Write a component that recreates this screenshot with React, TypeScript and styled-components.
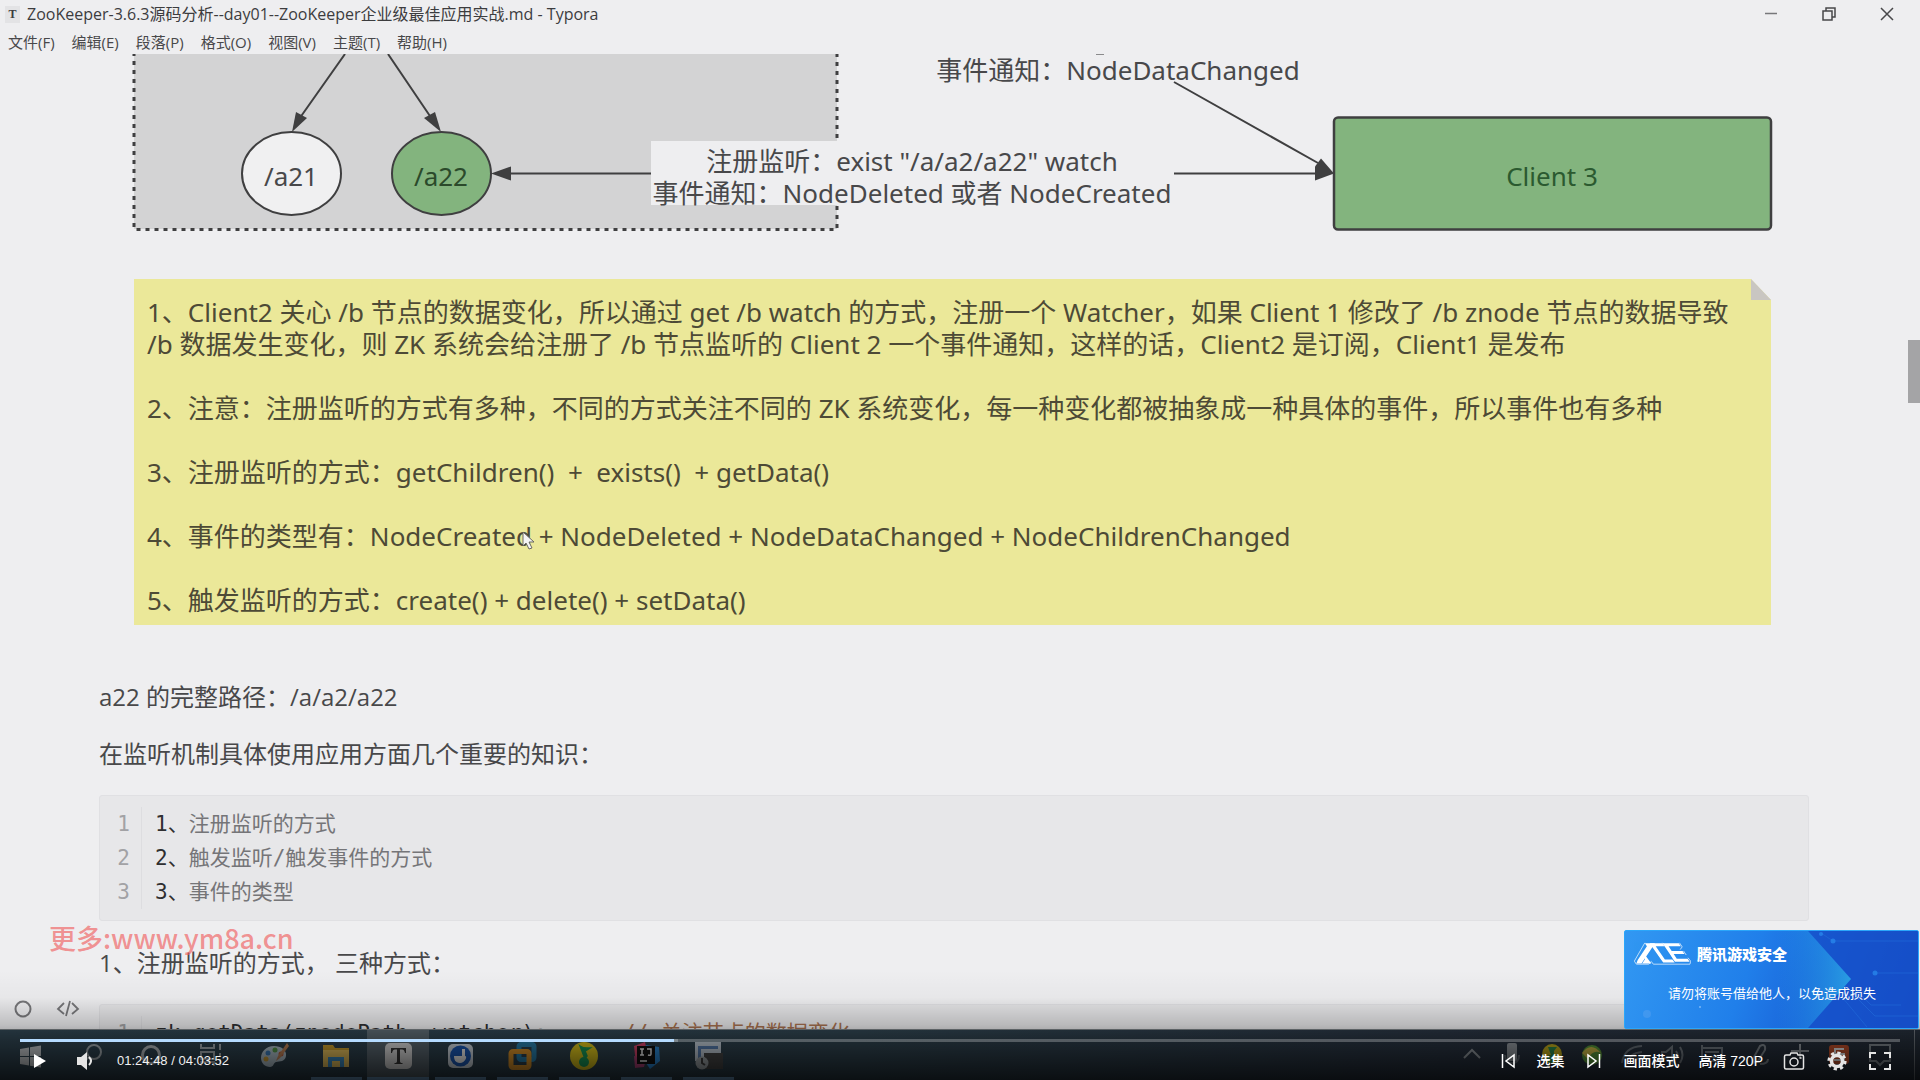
import React from "react";
import styled, { createGlobalStyle } from "styled-components";

const sans = `"Open Sans", "Noto Sans CJK SC", sans-serif`;
const drawn = `"Noto Sans", "Noto Sans CJK SC", sans-serif`;
const mono = `"DejaVu Sans Mono", "Noto Sans CJK SC", monospace`;
const ui = `"Liberation Sans", "Noto Sans CJK SC", sans-serif`;

const Global = createGlobalStyle`
  * { box-sizing: border-box; }
  body { margin: 0; background: #0c1114; overflow: hidden; }
  button { border: 0; padding: 0; margin: 0; background: none; color: inherit; font: inherit; cursor: pointer; }
  svg { display: block; }
  p, pre, ol, figure, h1, h2 { margin: 0; padding: 0; font-weight: 400; }
`;

const Screen = styled.main`
  position: relative;
  height: 100vh;
  display: grid;
  grid-template-rows: minmax(0, 1fr) 51px;
  overflow: hidden;
  font-family: ${sans};
  color: #48484a;
`;

/* ---------- editor window ---------- */

const Window = styled.section`
  position: relative;
  display: flex;
  flex-direction: column;
  min-height: 0;
  background: #eeeef0;
  overflow: hidden;
`;

const TitleBar = styled.header`
  display: flex;
  align-items: center;
  height: 30px;
  padding: 0 20px 2px 5px;
  flex: none;
`;

const AppBadge = styled.span`
  width: 15px;
  height: 17px;
  margin-right: 7px;
  background: #e3e3e5;
  font: 700 12px/17px "Liberation Serif", serif;
  text-align: center;
  color: #3c3c3e;
`;

const Title = styled.h1`
  flex: 1;
  font-size: 16px;
  line-height: 20px;
  color: #3c3c3e;
`;

const WindowButtons = styled.div`
  display: flex;
  gap: 32px;
`;

const WindowButton = styled.button`
  width: 26px;
  height: 26px;
  display: grid;
  place-items: center;
`;

const MenuBar = styled.nav`
  display: flex;
  gap: 17px;
  height: 24px;
  padding: 0 8px;
  flex: none;
  font-size: 15px;
  line-height: 24px;
`;

const Body = styled.div`
  flex: 1;
  min-height: 0;
  display: flex;
`;

const Doc = styled.article`
  flex: 1;
  min-width: 0;
  overflow: hidden;
  padding: 0 99px;
`;

const Scroll = styled.div`
  width: 12px;
  padding-top: 286px;
`;

const Thumb = styled.div`
  height: 63px;
  background: #a4a4a6;
`;

const Figure = styled.figure`
  padding: 0 38px 0 35px;
  margin-bottom: 53px;
`;

const Diagram = styled.svg`
  width: 100%;
  height: auto;
  overflow: visible;
  font-family: ${drawn};
  font-size: 26px;
  fill: #48484a;
`;

const Note = styled.div`
  position: relative;
  margin-top: 49px;
  padding: 17px 13px 9px;
  background: #ebe899;
  color: #4d4a36;
  font-family: ${drawn};
  font-size: 26px;
  line-height: 32px;
  white-space: pre-wrap;
  clip-path: polygon(0 0, calc(100% - 20px) 0, 100% 21px, 100% 100%, 0 100%);

  &::after {
    content: "";
    position: absolute;
    top: 0;
    right: 0;
    width: 20px;
    height: 21px;
    background: #c9c6c2;
  }
`;

const NoteItem = styled.p`
  & + & { margin-top: 32px; }
`;

const Para = styled.p`
  font-size: 24px;
  line-height: 38px;
  margin-bottom: 19px;
  white-space: pre-wrap;
`;

const CodeBlock = styled.ol`
  list-style: none;
  margin: 22px 0 23px;
  padding: 11px 0;
  border: 1px solid #e0e0e3;
  border-radius: 3px;
  background: #e7e7e9;
  font-family: ${mono};
  font-size: 21px;
  line-height: 34px;
  color: #757578;
`;

const CodeLine = styled.li`
  display: flex;
  white-space: pre;
`;

const LineNo = styled.span`
  width: 42px;
  padding-right: 11px;
  margin-right: 13px;
  border-right: 1px solid #dddde0;
  text-align: right;
  color: #a2a2a5;
`;

const Dark = styled.span`
  color: #2f2f31;
`;

const Comment = styled.span`
  color: #a8714f;
`;

const StatusIcons = styled.div`
  position: absolute;
  left: 14px;
  bottom: 11px;
  display: flex;
  align-items: center;
  gap: 24px;
  color: #77777a;
`;

const Pointer = styled.svg`
  position: absolute;
  left: 522px;
  top: 531px;
`;

const Watermark = styled.div`
  position: absolute;
  left: 49px;
  bottom: 124px;
  font: 500 27px/36px "Noto Sans CJK SC", sans-serif;
  color: rgba(240, 92, 92, 0.65);
`;

/* ---------- taskbar ---------- */

const Taskbar = styled.footer`
  display: flex;
  align-items: stretch;
  border-top: 1px solid #7d8488;
  background: linear-gradient(90deg, #304552 0%, #2f434f 45%, #293442 75%, #252e3a 100%);
`;

const Task = styled.button<{ $open?: boolean; $active?: boolean }>`
  width: ${(p) => (p.$open ? 62 : 61)}px;
  display: grid;
  place-items: center;
  position: relative;
  background: ${(p) => (p.$active ? "#5b6972" : "transparent")};

  &::after {
    content: "";
    display: ${(p) => (p.$open ? "block" : "none")};
    position: absolute;
    left: ${(p) => (p.$active ? 0 : 6)}px;
    right: ${(p) => (p.$active ? 0 : 5)}px;
    bottom: 0;
    height: 3px;
    background: #76a9d4;
  }
`;

const Tray = styled.div`
  margin-left: auto;
  display: flex;
  padding-right: 14px;
  border-right: 1px solid #6a7178;
  margin-right: 5px;
`;

const TrayButton = styled.button<{ $spaced?: boolean }>`
  width: 40px;
  margin-right: ${(p) => (p.$spaced ? 8 : 0)}px;
  display: grid;
  place-items: center;
  color: #969da3;
`;

/* ---------- player ---------- */

const Player = styled.section`
  position: absolute;
  left: 0;
  right: 0;
  bottom: 0;
  height: 110px;
  display: flex;
  flex-direction: column;
  justify-content: flex-end;
  background: linear-gradient(180deg, rgba(0, 0, 0, 0) 0%, rgba(0, 0, 0, 0.03) 25%, rgba(0, 0, 0, 0.2) 50%, rgba(0, 0, 0, 0.4) 65%, rgba(0, 0, 0, 0.76) 100%);
  font: 14px/20px ${ui};
  color: #fff;
`;

const Progress = styled.input`
  appearance: none;
  display: block;
  margin: 0 20px;
  height: 3px;
  background: linear-gradient(90deg, #b5dbff 0 34.8%, #7c868c 34.8% 35%, rgba(255, 255, 255, 0.25) 35%);
  cursor: pointer;

  &::-webkit-slider-thumb {
    appearance: none;
    width: 0;
    height: 0;
  }
`;

const Controls = styled.div`
  display: flex;
  align-items: center;
  height: 38px;
  padding: 0 29px 0 30px;
`;

const Control = styled.button<{ $gap?: number }>`
  display: block;
  margin-left: ${(p) => p.$gap ?? 0}px;
  font-weight: 500;
  white-space: nowrap;
`;

const Time = styled.span`
  margin-left: 24px;
  font-size: 13px;
  color: #f0f0f0;
`;

const Right = styled.div`
  margin-left: auto;
  display: flex;
  align-items: center;
`;

/* ---------- security toast ---------- */

const Toast = styled.aside`
  position: absolute;
  right: 1px;
  bottom: 51px;
  width: 295px;
  height: 99px;
  border: 1px solid #2ba6fa;
  border-radius: 2px;
  background: linear-gradient(110deg, #3298f2 0%, #207fea 42%, #195fd6 68%, #164bc4 100%);
  color: #fff;
  overflow: hidden;
  display: flex;
  flex-direction: column;
`;

const ToastArt = styled.svg`
  position: absolute;
  inset: 0;
  width: 100%;
  height: 100%;
`;

const ToastHead = styled.div`
  position: relative;
  display: flex;
  align-items: center;
  gap: 6px;
  padding: 11px 0 0 9px;
`;

const ToastTitle = styled.h2`
  font: 900 15px/22px "Noto Sans CJK SC", sans-serif;
`;

const ToastText = styled.p`
  position: relative;
  padding: 17px 0 0 43px;
  font: 13px/22px "Noto Sans CJK SC", sans-serif;
`;

const INK = "#3f3f40";

function WatchDiagram() {
  return (
    <Diagram viewBox="134 54 1637 176" role="img" aria-label="ZooKeeper watch">
      <rect x="134" y="40" width="703" height="189" fill="#d3d3d4" />
      <path d="M134 52V229.500H837V52" fill="none" stroke={INK} strokeWidth="3" strokeDasharray="4 5" />
      <g stroke={INK} strokeWidth="2" fill="none">
        <path d="M345 54L297 122M388 54L434 122M510 173.500H652M1174 173.500H1316M1174 82L1318 163" />
      </g>
      <g fill={INK}>
        <path d="M292 132l4-20 11 6z" />
        <path d="M441 132l-17-14 11-6z" />
        <path d="M491 173.500l20-7v14z" />
        <path d="M1334 173.500l-13-15-6 8v14z" />
      </g>
      <ellipse cx="291.500" cy="173.500" rx="49.500" ry="41.500" fill="#f0f0f1" stroke={INK} strokeWidth="2" />
      <ellipse cx="441.500" cy="173.500" rx="49.500" ry="41.500" fill="#83b47e" stroke={INK} strokeWidth="2" />
      <rect x="1334" y="117.500" width="437" height="112" rx="4" fill="#83b47e" stroke={INK} strokeWidth="2.500" />
      <rect x="651" y="141" width="523" height="64" fill="#eeeef0" />
      <rect x="1096" y="54" width="8" height="1" fill="#8a8a8c" />
      <g textAnchor="middle">
        <text x="291" y="186">/a21</text>
        <text x="441" y="186" fill="#2b4a2b">/a22</text>
        <text x="1552" y="186" fill="#2b5a30">Client 3</text>
        <text x="1118" y="80">事件通知：NodeDataChanged</text>
        <text x="912" y="171">注册监听：exist "/a/a2/a22" watch</text>
        <text x="912" y="203">事件通知：NodeDeleted 或者 NodeCreated</text>
      </g>
    </Diagram>
  );
}

const notes = [
  "1、Client2 关心 /b 节点的数据变化，所以通过 get /b watch 的方式，注册一个 Watcher，如果 Client 1 修改了 /b znode 节点的数据导致\n/b 数据发生变化，则 ZK 系统会给注册了 /b 节点监听的 Client 2 一个事件通知，这样的话，Client2 是订阅，Client1 是发布",
  "2、注意：注册监听的方式有多种，不同的方式关注不同的 ZK 系统变化，每一种变化都被抽象成一种具体的事件，所以事件也有多种",
  "3、注册监听的方式：getChildren()  +  exists()  + getData()",
  "4、事件的类型有：NodeCreated + NodeDeleted + NodeDataChanged + NodeChildrenChanged",
  "5、触发监听的方式：create() + delete() + setData()",
];

const codeLines = ["注册监听的方式", "触发监听/触发事件的方式", "事件的类型"];
const menus = ["文件(F)", "编辑(E)", "段落(P)", "格式(O)", "视图(V)", "主题(T)", "帮助(H)"];

const tasks: { name: string; open?: boolean; active?: boolean; art: React.ReactNode }[] = [
  { name: "Start", art: <path d="M4 8l9-1.500v8.500H4zM14 6.300L25 4.500V15H14zM4 16h9v8.500L4 23zM14 16h11v10.500L14 24.700z" fill="#c9ced1" /> },
  { name: "Search", art: <g fill="none" stroke="#a7b0b5" strokeWidth="2"><circle cx="17" cy="11" r="7" /><path d="M12 16l-7 7" /></g> },
  { name: "Cortana", art: <circle cx="13" cy="14" r="8.500" fill="none" stroke="#b9c0c4" strokeWidth="3" /> },
  { name: "Task view", art: <path d="M2 3v4h13V3M2 11h13v7H2zM2 25v-4h13v4M21 3v6M21 12v3M21 18v7" fill="none" stroke="#aab2b7" strokeWidth="2" /> },
  {
    name: "Paint", art: <g><path d="M14 5C6 5 1 11 1 17c0 5 4 9 9 9 4 0 3-4 6-5 4-1 9 0 10-6C27 9 21 5 14 5z" fill="#b9cbd6" /><circle cx="8" cy="12" r="2.500" fill="#3f83c4" /><circle cx="15" cy="9" r="2.500" fill="#5aa04e" /><circle cx="21" cy="13" r="2.500" fill="#c9603e" /><circle cx="6" cy="18" r="2.500" fill="#d7a83c" /><path d="M27 2l-9 13-2 5 4-3L29 5z" fill="#c98a5c" /></g>,
  },
  { name: "Explorer", open: true, art: <g><path d="M1 4h10l2 3h14v19H1z" fill="#d9a92e" /><path d="M1 9h26v17H1z" fill="#f2cb62" /><path d="M6 26V16h16v10h-4v-6h-8v6z" fill="#3f92cc" /></g> },
  { name: "Typora", open: true, active: true, art: <g><rect x="1" y="2" width="27" height="26" rx="5" fill="#e2e2e2" /><path d="M7 7h15v5h-1c-.5-2.500-1.500-3.500-3-3.500h-2V20c0 1.500.5 2 2.500 2v1h-8v-1c2 0 2.500-.5 2.500-2V8.500h-2c-1.500 0-2.500 1-3 3.500H7z" fill="#3a3a3a" /></g> },
  { name: "Listen", open: true, art: <g><rect x="2" y="3" width="25" height="24" rx="5" fill="#d9e2ea" /><circle cx="14.500" cy="15" r="10.500" fill="#1e5fc0" /><path d="M8 15h8V8h3v7c3 0 0 7-5 7s-6-4-6-7z" fill="#fff" /></g> },
  { name: "VMware", open: true, art: <g fill="none" strokeWidth="5"><rect x="11" y="3.500" width="15" height="15" rx="2" stroke="#2a86b5" /><rect x="3" y="10.500" width="18" height="16" rx="2" stroke="#e59a2c" /></g> },
  { name: "QQ Music", open: true, art: <g><circle cx="14" cy="15" r="14" fill="#e8cf1e" /><path d="M10 5c4 3 8 2 10 2l-5 3 2 5-2 3z" fill="#1ba35d" stroke="#1ba35d" strokeWidth="1.500" /><circle cx="14" cy="21" r="5" fill="#1ba35d" /></g> },
  { name: "IntelliJ IDEA", open: true, art: <g><path d="M2 5l11-4 3 14-12 8z" fill="#e0456f" /><path d="M14 4l13 2 1 14-10 8-4-6z" fill="#2d8fe0" /><path d="M2 15l12 3-2 8-9 1z" fill="#b8457d" /><rect x="5" y="5" width="18" height="18" fill="#111" /><path d="M8 8h4M10 8v6M8 14h4M15 8h4v5q0 2-3 1M8 20h7" fill="none" stroke="#fff" strokeWidth="1.500" /></g> },
  { name: "Console", open: true, art: <g><rect x="1" y="1" width="26" height="19" fill="#c8d3de" /><rect x="4" y="5" width="20" height="3" fill="#5980b4" /><rect x="4" y="5" width="3" height="12" fill="#5980b4" /><rect x="10" y="12" width="19" height="16" fill="#4a4a4a" /><circle cx="8" cy="22" r="6.500" fill="#a9b0b4" /><path d="M8 17v5l3 2" fill="none" stroke="#444" strokeWidth="2" /></g> },
];

const tray: { name: string; spaced?: boolean; art: React.ReactNode }[] = [
  { name: "Show hidden", art: <path d="M4 15l8-8 8 8" /> },
  { name: "Microphone", art: <g><rect x="8" y="1" width="8" height="16" rx="1" fill="currentColor" /><path d="M5 12q0 8 7 8t7-8" opacity="0.500" /></g> },
  { name: "Music", art: <g stroke="none"><circle cx="12" cy="11" r="10" fill="#c9b41e" /><path d="M8 4h9l-3 4v6a4 4 0 11-3-2z" fill="#2b8f4f" /></g> },
  { name: "Guard", art: <g stroke="none"><circle cx="12" cy="12" r="10" fill="#5b9e3c" /><path d="M2 10q9-12 19 0-8-4-13 6z" fill="#d6c34a" /></g> },
  { name: "Network", art: <path d="M2 20Q4 4 22 3M7 21Q9 10 22 9M13 21q1-6 9-6" opacity="0.600" /> },
  { name: "Sound", art: <path d="M2 9h4l6-5v16l-6-5H2zM16 8q3 4 0 8M20 4q5 8 0 16" opacity="0.700" /> },
  { name: "Keyboard", spaced: true, art: <path d="M2 5h20v13H2zM5 9h14M5 14h14M2 5V2" opacity="0.700" /> },
  { name: "Pen", art: <path d="M12 3q6-3 5 4l-7 11-5 2 1-6zM12 21q8 0 8-5" opacity="0.800" /> },
  { name: "Input", art: <path d="M3 8h18M12 1v14" /> },
  { name: "Sogou", art: <g stroke="none"><rect x="1" y="2" width="20" height="19" rx="3" fill="#c2512c" /><path d="M16 6H7v5h9v6H6" fill="none" stroke="#eee" strokeWidth="2" /></g> },
  { name: "Notifications", art: <path d="M2 2h20v16h-6l-4 4-4-4H2z" opacity="0.800" /> },
];

export default function App() {
  return (
    <Screen>
      <Global />
      <Window>
        <TitleBar>
          <AppBadge>T</AppBadge>
          <Title>ZooKeeper-3.6.3源码分析--day01--ZooKeeper企业级最佳应用实战.md - Typora</Title>
          <WindowButtons>
            <WindowButton aria-label="Minimize">
              <svg width="14" height="14" stroke="#77777a" strokeWidth="1.500"><path d="M1 6.500h12" /></svg>
            </WindowButton>
            <WindowButton aria-label="Restore">
              <svg width="14" height="14" fill="none" stroke="#48484a" strokeWidth="1.500"><path d="M1 4h9v9H1zM4 4V1h9v9h-3" /></svg>
            </WindowButton>
            <WindowButton aria-label="Close">
              <svg width="14" height="14" stroke="#48484a" strokeWidth="1.500"><path d="M1 1l12 12M13 1L1 13" /></svg>
            </WindowButton>
          </WindowButtons>
        </TitleBar>
        <MenuBar>
          {menus.map((m) => (
            <button key={m}>{m}</button>
          ))}
        </MenuBar>
        <Body>
          <Doc>
            <Figure>
              <WatchDiagram />
              <Note>
                {notes.map((n) => (
                  <NoteItem key={n}>{n}</NoteItem>
                ))}
              </Note>
            </Figure>
            <Para>a22 的完整路径：/a/a2/a22</Para>
            <Para>在监听机制具体使用应用方面几个重要的知识：</Para>
            <CodeBlock>
              {codeLines.map((t, i) => (
                <CodeLine key={t}>
                  <LineNo>{i + 1}</LineNo>
                  <Dark>{i + 1}、</Dark>
                  {t}
                </CodeLine>
              ))}
            </CodeBlock>
            <Para>1、注册监听的方式， 三种方式：</Para>
            <CodeBlock>
              <CodeLine>
                <LineNo>1</LineNo>
                <Dark>{"zk.getData(znodePath, watcher);      "}</Dark>
                <Comment>// 关注节点的数据变化</Comment>
              </CodeLine>
            </CodeBlock>
          </Doc>
          <Scroll>
            <Thumb />
          </Scroll>
        </Body>
        <StatusIcons>
          <button aria-label="Outline">
            <svg width="18" height="18" fill="none" stroke="currentColor" strokeWidth="2"><circle cx="9" cy="9" r="7.500" /></svg>
          </button>
          <button aria-label="Source mode">
            <svg width="24" height="18" fill="none" stroke="currentColor" strokeWidth="1.800"><path d="M8 3L2 9l6 5M16 3l6 6-6 5M14 1l-4 15" /></svg>
          </button>
        </StatusIcons>
      </Window>

      <Taskbar>
        {tasks.map((t) => (
          <Task key={t.name} aria-label={t.name} $open={t.open} $active={t.active}>
            <svg width="29" height="29" viewBox="0 0 29 29">{t.art}</svg>
          </Task>
        ))}
        <Tray>
          {tray.map((t) => (
            <TrayButton key={t.name} aria-label={t.name} $spaced={t.spaced}>
              <svg width="24" height="24" viewBox="0 0 24 24" fill="none" stroke="currentColor" strokeWidth="2">{t.art}</svg>
            </TrayButton>
          ))}
        </Tray>
      </Taskbar>

      <Watermark>更多:www.ym8a.cn</Watermark>
      <Pointer width="14" height="20" viewBox="0 0 14 20">
        <path d="M1 1v14l3-3 3 6 3-1-3-6h5z" fill="#f4f4f4" stroke="#6a6860" strokeWidth="1" />
      </Pointer>

      <Player aria-label="Player">
        <Progress type="range" aria-label="Progress" min={0} max={14632} defaultValue={5088} />
        <Controls>
          <Control aria-label="Play">
            <svg width="20" height="20" fill="#fff"><path d="M4 3l12 7-12 7z" /></svg>
          </Control>
          <Control aria-label="Volume" $gap={25}>
            <svg width="18" height="20" fill="#e4e4e4"><path d="M2 6h4l6-5v18l-6-5H2z" /><path d="M14 6q4 4 0 8" fill="none" stroke="#e4e4e4" strokeWidth="2" /></svg>
          </Control>
          <Time>01:24:48 / 04:03:52</Time>
          <Right>
            <Control aria-label="Previous">
              <svg width="14" height="16" fill="none" stroke="#fff" strokeWidth="1.500"><path d="M1.500 1v14M13 2v12L5 8z" /></svg>
            </Control>
            <Control $gap={21}>选集</Control>
            <Control aria-label="Next" $gap={23}>
              <svg width="14" height="16" fill="none" stroke="#fff" strokeWidth="1.500"><path d="M12.500 1v14M1 2v12l8-6z" /></svg>
            </Control>
            <Control $gap={22}>画面模式</Control>
            <Control $gap={19}>高清 720P</Control>
            <Control aria-label="Screenshot" $gap={20}>
              <svg width="22" height="20" fill="none" stroke="#e4e4e4" strokeWidth="1.500"><path d="M3 4h4l1-2h6l1 2h4q1.500 0 1.500 1.500v11q0 1.500-1.500 1.500H3q-1.500 0-1.500-1.500v-11Q1.500 4 3 4z" /><circle cx="11" cy="11" r="4" /><path d="M16.500 7h2" /></svg>
            </Control>
            <Control aria-label="Settings" $gap={22}>
              <svg width="20" height="20" viewBox="0 0 20 20" fill="none" stroke="#e4e4e4"><circle cx="10" cy="10" r="5.500" strokeWidth="3.500" /><circle cx="10" cy="10" r="8.200" strokeWidth="2.800" strokeDasharray="3.220 3.220" /></svg>
            </Control>
            <Control aria-label="Full screen" $gap={22}>
              <svg width="22" height="18" fill="none" stroke="#e4e4e4" strokeWidth="2"><path d="M1 6V1h6M15 1h6v5M21 12v5h-6M7 17H1v-5" /></svg>
            </Control>
          </Right>
        </Controls>
      </Player>

      <Toast>
        <ToastArt viewBox="0 0 293 97" preserveAspectRatio="none">
          <defs>
            <linearGradient id="arrow" x1="0" x2="1">
              <stop offset="0.400" stopColor="#1f8fe6" stopOpacity="0" />
              <stop offset="1" stopColor="#2aa4e4" stopOpacity="0.900" />
            </linearGradient>
          </defs>
          <path d="M183 0h110v97H183l43-49z" fill="#164fc8" opacity="0.700" />
          <path d="M100 0h83l43 48-43 49h-83z" fill="url(#arrow)" />
          <g stroke="#2a7fe6" fill="none" opacity="0.350">
            <path d="M208 10h85M250 42h43M196 2l12 8M212 60l30 36M220 55l30 30h43M232 60l14 14h30" />
          </g>
          <g fill="#2a8cf0" opacity="0.700">
            <circle cx="208" cy="10" r="2.500" />
            <circle cx="250" cy="42" r="2.500" />
            <circle cx="196" cy="3" r="2" />
          </g>
          <circle cx="22" cy="83" r="4" fill="#4a9bf0" opacity="0.700" />
          <circle cx="75" cy="76" r="1" fill="#7ab8f8" />
        </ToastArt>
        <ToastHead>
          <svg width="57" height="23" viewBox="0 0 168 67">
            <g fill="none" stroke="#fff" strokeWidth="2.500" opacity="0.800">
              <path d="M32 2L1 56l6 9h36l8-8M51 57l6 8h108l2-9-8-10M84 2l8 9M134 2l8 12-6 8M146 26l8 12" />
              <path d="M62 20l22 34M108 34l12 22" />
            </g>
            <g fill="#fff">
              <path d="M32 3h30L22 63H7l4-10L38 12z" />
              <path d="M31 36l20 27H24l8-12z" />
              <path d="M46 3h38l6 9H64l27 39h22l7 9H86z" />
              <path d="M84 3h48l6 9h-36l9 14h32l6 9h-32l9 14h32l6 9h-43z" />
            </g>
          </svg>
          <ToastTitle>腾讯游戏安全</ToastTitle>
        </ToastHead>
        <ToastText>请勿将账号借给他人，以免造成损失</ToastText>
      </Toast>
    </Screen>
  );
}
